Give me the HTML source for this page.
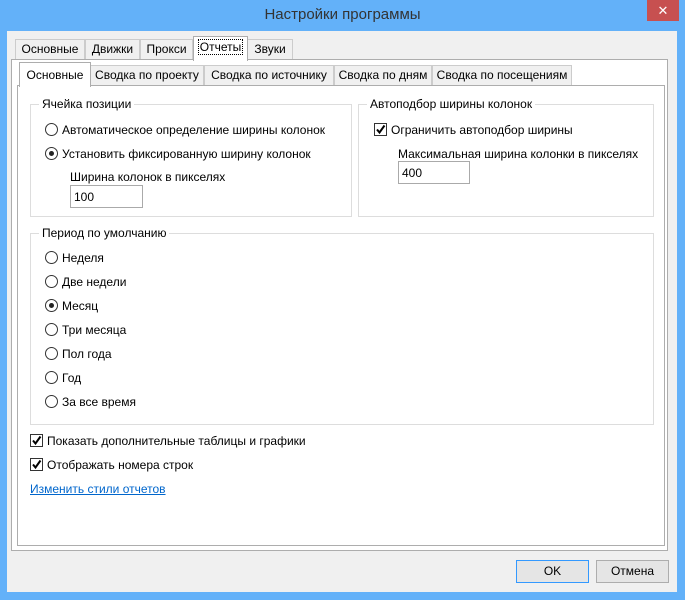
<!DOCTYPE html>
<html><head><meta charset="utf-8"><style>
*{box-sizing:border-box;margin:0;padding:0}
body{width:685px;height:600px;background:#63b1f9;font-family:"Liberation Sans",sans-serif;font-size:12px;color:#000;position:relative;overflow:hidden}
.a{position:absolute;white-space:nowrap}
.title{left:0;top:6px;width:685px;text-align:center;font-size:15px;color:#333}
.close{left:647px;top:0;width:32px;height:21px;background:#c75050;color:#fff;text-align:center;font-size:13px;line-height:21px}
.client{left:7px;top:31px;width:670px;height:561px;background:#f0f0f0}
.tab{position:absolute;height:21px;border:1px solid #ccc;border-bottom:none;background:#f0f0f0;text-align:center;line-height:19px}
.panel{position:absolute;border:1px solid #adadad;background:#fff}
.grp{position:absolute;border:1px solid #ddd}
.gl{position:absolute;top:-8px;left:8px;background:#fff;padding:0 3px}
.rb{position:absolute;width:13px;height:13px;border:1px solid #333;border-radius:50%;background:#fff}
.rb.on::after{content:"";position:absolute;left:3px;top:3px;width:5px;height:5px;border-radius:50%;background:#222}
.cb{position:absolute;width:13px;height:13px;border:1px solid #333;background:#fff}
.cb svg{position:absolute;left:0;top:0}
.inp{position:absolute;height:23px;border:1px solid #aaa;background:#fff;padding:4px 3px}
.btn{position:absolute;height:23px;border:1px solid #adadad;background:#e5e5e5;text-align:center;line-height:21px}
</style></head><body>
<div class="a title">Настройки программы</div>
<div class="a close">✕</div>
<div class="a client"></div>
<!-- outer tabs -->
<div class="tab" style="left:15px;top:39px;width:70px">Основные</div>
<div class="tab" style="left:85px;top:39px;width:55px">Движки</div>
<div class="tab" style="left:140px;top:39px;width:53px">Прокси</div>
<div class="tab" style="left:247px;top:39px;width:46px">Звуки</div>
<div class="panel" style="left:11px;top:59px;width:657px;height:492px"></div>
<div class="tab" style="left:193px;top:36px;width:55px;height:25px;background:#fff;border-color:#adadad;line-height:20px"><span style="outline:1px dotted #000;padding:0 1px">Отчеты</span></div>
<!-- inner tabs -->
<div class="tab" style="left:90px;top:65px;width:114px">Сводка по проекту</div>
<div class="tab" style="left:204px;top:65px;width:130px">Сводка по источнику</div>
<div class="tab" style="left:334px;top:65px;width:98px">Сводка по дням</div>
<div class="tab" style="left:432px;top:65px;width:140px">Сводка по посещениям</div>
<div class="panel" style="left:17px;top:85px;width:648px;height:461px"></div>
<div class="tab" style="left:19px;top:62px;width:72px;height:25px;background:#fff;border-color:#adadad;line-height:24px">Основные</div>

<div class="grp" style="left:30px;top:104px;width:322px;height:113px"><span class="gl">Ячейка позиции</span></div>
<div class="rb" style="left:45px;top:123px"></div><div class="a" style="left:62px;top:123px">Автоматическое определение ширины колонок</div>
<div class="rb on" style="left:45px;top:147px"></div><div class="a" style="left:62px;top:147px">Установить фиксированную ширину колонок</div>
<div class="a" style="left:70px;top:170px">Ширина колонок в пикселях</div>
<div class="inp" style="left:70px;top:185px;width:73px">100</div>

<div class="grp" style="left:358px;top:104px;width:296px;height:113px"><span class="gl">Автоподбор ширины колонок</span></div>
<div class="cb" style="left:374px;top:123px"><svg width="11" height="11"><path d="M2 5.5 L4.5 8.5 L9.5 1.5" stroke="#000" stroke-width="2" fill="none"/></svg></div>
<div class="a" style="left:391px;top:123px">Ограничить автоподбор ширины</div>
<div class="a" style="left:398px;top:147px">Максимальная ширина колонки в пикселях</div>
<div class="inp" style="left:398px;top:161px;width:72px">400</div>

<div class="grp" style="left:30px;top:233px;width:624px;height:192px"><span class="gl">Период по умолчанию</span></div>
<div class="rb" style="left:45px;top:251px"></div><div class="a" style="left:62px;top:251px">Неделя</div>
<div class="rb" style="left:45px;top:275px"></div><div class="a" style="left:62px;top:275px">Две недели</div>
<div class="rb on" style="left:45px;top:299px"></div><div class="a" style="left:62px;top:299px">Месяц</div>
<div class="rb" style="left:45px;top:323px"></div><div class="a" style="left:62px;top:323px">Три месяца</div>
<div class="rb" style="left:45px;top:347px"></div><div class="a" style="left:62px;top:347px">Пол года</div>
<div class="rb" style="left:45px;top:371px"></div><div class="a" style="left:62px;top:371px">Год</div>
<div class="rb" style="left:45px;top:395px"></div><div class="a" style="left:62px;top:395px">За все время</div>

<div class="cb" style="left:30px;top:434px"><svg width="11" height="11"><path d="M2 5.5 L4.5 8.5 L9.5 1.5" stroke="#000" stroke-width="2" fill="none"/></svg></div>
<div class="a" style="left:47px;top:434px">Показать дополнительные таблицы и графики</div>
<div class="cb" style="left:30px;top:458px"><svg width="11" height="11"><path d="M2 5.5 L4.5 8.5 L9.5 1.5" stroke="#000" stroke-width="2" fill="none"/></svg></div>
<div class="a" style="left:47px;top:458px">Отображать номера строк</div>
<div class="a" style="left:30px;top:482px;color:#0066cc;text-decoration:underline">Изменить стили отчетов</div>

<div class="btn" style="left:516px;top:560px;width:73px;border-color:#3399ff">OK</div>
<div class="btn" style="left:596px;top:560px;width:73px">Отмена</div>
</body></html>
